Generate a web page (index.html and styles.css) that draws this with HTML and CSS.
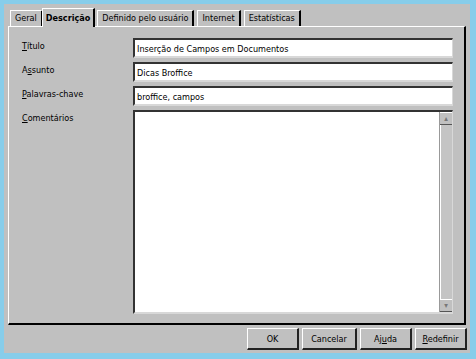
FILE: index.html
```html
<!DOCTYPE html>
<html>

<head>
  <meta charset="utf-8">
  <title>Propriedades</title>
  <link rel="stylesheet" href="styles.css">
</head>

<body>

  <div class="dialog">

    <!-- Tab bar -->
    <div class="tabs">
      <div class="tab first">Geral</div>
      <div class="tab active">Descrição</div>
      <div class="tab">Definido pelo usuário</div>
      <div class="tab">Internet</div>
      <div class="tab">Estatísticas</div>
    </div>

    <!-- Description page -->
    <div class="panel">
      <div class="row">
        <label class="label"><u>T</u>ítulo</label>
        <div class="field">Inserção de Campos em Documentos</div>
      </div>
      <div class="row">
        <label class="label">A<u>s</u>sunto</label>
        <div class="field">Dicas Broffice</div>
      </div>
      <div class="row">
        <label class="label"><u>P</u>alavras-chave</label>
        <div class="field">broffice, campos</div>
      </div>
      <div class="row grow">
        <label class="label"><u>C</u>omentários</label>
        <div class="field memo">
          <div class="memo-text"></div>
          <div class="scrollbar">
            <div class="arrow">&#9652;</div>
            <div class="track"></div>
            <div class="arrow">&#9662;</div>
          </div>
        </div>
      </div>
    </div>

    <!-- Dialog buttons -->
    <div class="buttons">
      <button class="btn">OK</button>
      <button class="btn wide">Cancelar</button>
      <button class="btn">Aj<u>u</u>da</button>
      <button class="btn"><u>R</u>edefinir</button>
    </div>

  </div>

</body>

</html>
```

FILE: styles.css
```css
body {
  margin: 0;
  padding: 4px 6px 6px 4px;
  background-color: #87cdea;
  font-family: 'DejaVu Sans Condensed', 'DejaVu Sans', sans-serif;
  font-size: 9px;
  color: #000;
}

.dialog {
  background-color: #c0c0c0;
  height: 349px;
  padding: 4px 3px 0 4px;
  box-sizing: border-box;
  display: flex;
  flex-direction: column;
}

/* Tabs */
.tabs {
  display: flex;
  align-items: flex-end;
  height: 18px;
  padding-left: 2px;
}

.tab {
  height: 15px;
  line-height: 15px;
  padding: 0 4px;
  margin-right: 3px;
  border-top: 1px solid #fff;
  border-left: 1px solid #fff;
  border-right: 2px solid #000;
  background-color: #c0c0c0;
}

.tab.first {
  margin-right: 0;
}

.tab.active {
  height: 18px;
  line-height: 18px;
  font-weight: bold;
  margin: 0 2px 0 -1px;
  position: relative;
  top: 1px;
  padding: 0 3px;
}

/* Tab page */
.panel {
  flex: 1;
  margin-right: 1px;
  border-top: 1px solid #fff;
  border-left: 1px solid #fff;
  border-right: 2px solid #000;
  border-bottom: 2px solid #000;
  padding: 11px 11px 9px 13px;
  display: flex;
  flex-direction: column;
  gap: 4px;
}

.row {
  display: flex;
}

.row.grow {
  flex: 1;
}

.label {
  width: 111px;
  padding-top: 3px;
}

.field {
  flex: 1;
  height: 20px;
  line-height: 18px;
  box-sizing: border-box;
  background-color: #fff;
  border-top: 2px solid #333;
  border-left: 2px solid #333;
  border-right: 1px solid #d8d8d8;
  border-bottom: 2px solid #d8d8d8;
  padding-left: 2px;
}

.field.memo {
  height: auto;
  display: flex;
  padding: 0;
}

.memo-text {
  flex: 1;
}

.scrollbar {
  width: 12px;
  display: flex;
  flex-direction: column;
  background-color: #c0c0c0;
  border-left: 1px solid #999;
}

.arrow {
  height: 11px;
  line-height: 11px;
  text-align: center;
  font-size: 8px;
  color: #777;
  border-top: 1px solid #fff;
  border-bottom: 1px solid #555;
}

.track {
  flex: 1;
  background-color: #c4c4c4;
  border-left: 1px solid #fff;
}

/* Buttons */
.buttons {
  display: flex;
  justify-content: flex-end;
  gap: 3px;
  padding: 3px 0 3px 0;
}

.btn {
  font-family: 'DejaVu Sans Condensed', 'DejaVu Sans', sans-serif;
  font-size: 9px;
  height: 22px;
  width: 52px;
  padding: 0;
  background-color: #c0c0c0;
  border-top: 1px solid #fff;
  border-left: 1px solid #fff;
  border-right: 2px solid #222;
  border-bottom: 2px solid #222;
}

.btn.wide {
  width: 55px;
}
```
